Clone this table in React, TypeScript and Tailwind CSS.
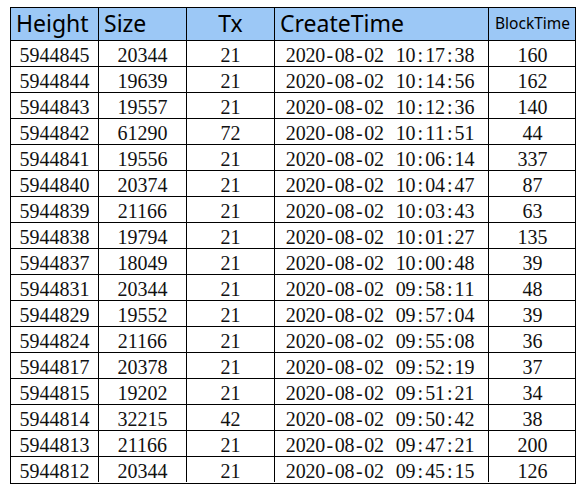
import React from "react";

const rows: [string, string, string, string, string, string][] = [
  ["5944845", "20344", "21", "2020-08-02", "10:17:38", "160"],
  ["5944844", "19639", "21", "2020-08-02", "10:14:56", "162"],
  ["5944843", "19557", "21", "2020-08-02", "10:12:36", "140"],
  ["5944842", "61290", "72", "2020-08-02", "10:11:51", "44"],
  ["5944841", "19556", "21", "2020-08-02", "10:06:14", "337"],
  ["5944840", "20374", "21", "2020-08-02", "10:04:47", "87"],
  ["5944839", "21166", "21", "2020-08-02", "10:03:43", "63"],
  ["5944838", "19794", "21", "2020-08-02", "10:01:27", "135"],
  ["5944837", "18049", "21", "2020-08-02", "10:00:48", "39"],
  ["5944831", "20344", "21", "2020-08-02", "09:58:11", "48"],
  ["5944829", "19552", "21", "2020-08-02", "09:57:04", "39"],
  ["5944824", "21166", "21", "2020-08-02", "09:55:08", "36"],
  ["5944817", "20378", "21", "2020-08-02", "09:52:19", "37"],
  ["5944815", "19202", "21", "2020-08-02", "09:51:21", "34"],
  ["5944814", "32215", "42", "2020-08-02", "09:50:42", "38"],
  ["5944813", "21166", "21", "2020-08-02", "09:47:21", "200"],
  ["5944812", "20344", "21", "2020-08-02", "09:45:15", "126"],
];

function Mono({ text }: { text: string }) {
  return (
    <span className="inline-flex">
      {text.split("").map((c, i) => (
        <span key={i} className="inline-block w-[9.8px] text-center">
          {c}
        </span>
      ))}
    </span>
  );
}

const serif = "font-['Liberation_Serif',serif] text-[20px] leading-[25px] text-[#111]";
const sans = "font-['Noto_Sans',sans-serif] text-black";

export default function App() {
  return (
    <div className="w-[582px] h-[492px] bg-white pt-[7px] pl-[10px] overflow-hidden">
      <div className="w-[566px] border border-black">
        <div className={`grid grid-cols-[88px_88px_88px_214px_87px] h-[33px] bg-[#9cc8f6] border-b border-black ${sans}`}>
          <div className="border-r border-black pl-[5px] text-[23px] leading-[31px]">Height</div>
          <div className="border-r border-black pl-[5px] text-[23px] leading-[31px]">Size</div>
          <div className="border-r border-black text-center text-[23px] leading-[31px]">Tx</div>
          <div className="border-r border-black pl-[5px] text-[23px] leading-[31px]">CreateTime</div>
          <div className="text-center text-[15.5px] leading-[31px]">BlockTime</div>
        </div>
        {rows.map((r, i) => (
          <div
            key={i}
            className={`grid grid-cols-[88px_88px_88px_214px_87px] grid-rows-[25px] h-[26px] overflow-hidden ${i < rows.length - 1 ? "border-b border-black" : ""} ${serif}`}
          >
            <div className="border-r border-black text-center pt-[2px]">{r[0]}</div>
            <div className="border-r border-black text-center pt-[2px]">{r[1]}</div>
            <div className="border-r border-black text-center pt-[2px]">{r[2]}</div>
            <div className="border-r border-black flex justify-center gap-[12px] pt-[2px] pr-[3px]">
              <Mono text={r[3]} />
              <Mono text={r[4]} />
            </div>
            <div className="text-center pt-[2px]">{r[5]}</div>
          </div>
        ))}
      </div>
    </div>
  );
}
